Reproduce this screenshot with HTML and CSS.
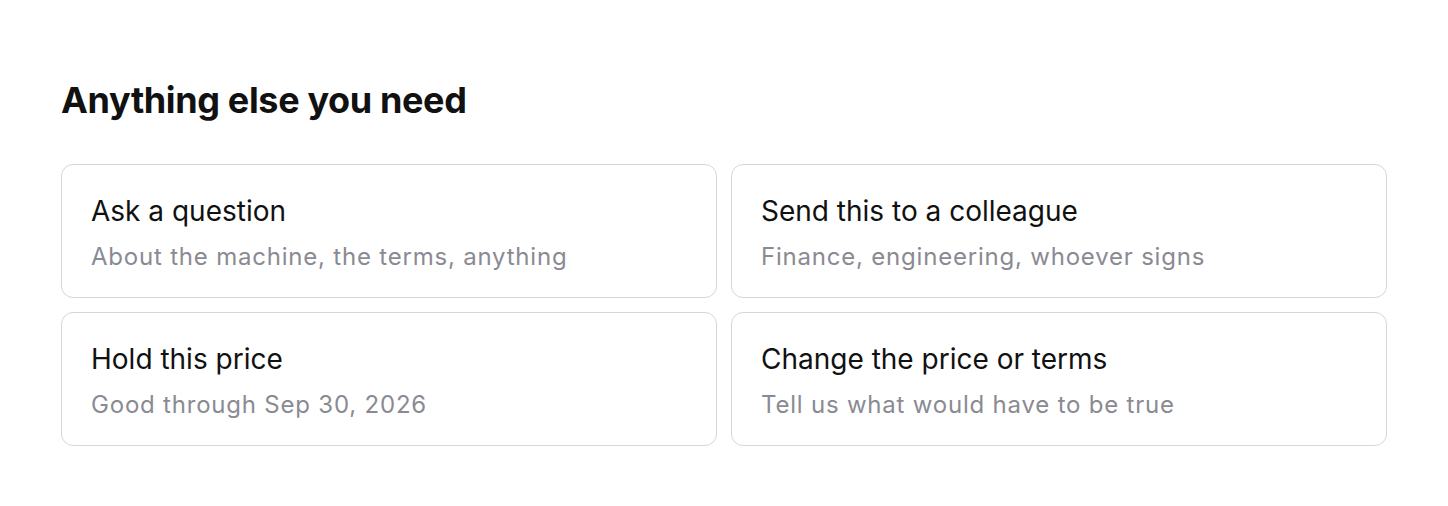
FILE: index.html
```html
<!DOCTYPE html>
<html>
<head>
<meta charset="utf-8">
<link rel="stylesheet" href="styles.css">
</head>
<body>
<section class="section">
  <h2 class="heading">Anything else you need</h2>
  <div class="grid">
    <div class="card">
      <div class="card-title">Ask a question</div>
      <div class="card-sub">About the machine, the terms, anything</div>
    </div>
    <div class="card">
      <div class="card-title">Send this to a colleague</div>
      <div class="card-sub">Finance, engineering, whoever signs</div>
    </div>
    <div class="card">
      <div class="card-title">Hold this price</div>
      <div class="card-sub">Good through Sep 30, 2026</div>
    </div>
    <div class="card">
      <div class="card-title">Change the price or terms</div>
      <div class="card-sub">Tell us what would have to be true</div>
    </div>
  </div>
</section>
</body>
</html>
```

FILE: styles.css
```css
html, body {
  margin: 0;
  padding: 0;
  background: #ffffff;
}
body {
  font-family: Inter, "Noto Sans", sans-serif;
  color: #111111;
}
.section {
  padding: 76px 61px 0 61px;
}
.heading {
  margin: 0;
  font-size: 36px;
  line-height: 48px;
  font-weight: 700;
  letter-spacing: -0.01em;
  color: #111111;
}
.grid {
  margin-top: 40px;
  display: grid;
  grid-template-columns: 1fr 1fr;
  gap: 14px;
}
.card {
  border: 1px solid #d6d6d3;
  border-radius: 12px;
  padding: 28px 29px 25px 29px;
  display: flex;
  flex-direction: column;
  gap: 13px;
}
.card-title {
  font-size: 28px;
  line-height: 36px;
  font-weight: 400;
  color: #111111;
}
.card-sub {
  font-size: 24px;
  line-height: 30px;
  letter-spacing: 0.033em;
  color: #8a8a92;
}
```
